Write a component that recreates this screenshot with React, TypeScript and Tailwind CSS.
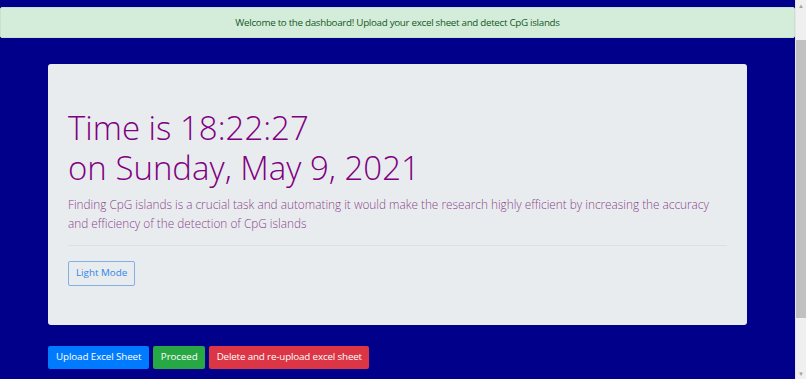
import React from "react"

const font = "font-['Open_Sans','Noto_Sans',sans-serif]"

const App = () => {
  return (
    <div className={`flex h-[379px] w-full overflow-hidden bg-[#00008b] ${font}`}>
      <div className="flex-1 pt-[7px]">
        {/* alert */}
        <div className="rounded-[2px] border border-[#c3e6cb] bg-[#d4edda] px-[12px] py-[7.5px] text-center text-[9.8px] leading-[14.4px] tracking-[-0.3px] text-[#155724]">
          Welcome to the dashboard! Upload your excel sheet and detect CpG islands
        </div>

        <div className="mx-auto mt-[26px] w-[699px]">
          {/* jumbotron */}
          <div className="rounded-[3px] bg-[#e9ecef] px-[20px] pt-[44px] pb-[39px]">
            <h1 className="text-[33px] font-light leading-[40px] text-[#800080]">
              Time is 18:22:27
              <br />
              on Sunday, May 9, 2021
            </h1>
            <p className="mt-[7px] text-[11.8px] font-light leading-[18.5px] text-[#8a468a]">
              Finding CpG islands is a crucial task and automating it would make the research highly efficient by
              increasing the accuracy and efficiency of the detection of CpG islands
            </p>
            <hr className="mt-[13px] mb-[12px] border-t border-[#dcdfe3]" />
            <button className="rounded-[2px] border border-[#7fb0e6] px-[7px] py-[4px] text-[9.8px] leading-[14.4px] text-[#2f86e8]">
              Light Mode
            </button>
          </div>

          <div className="mt-[21px] flex gap-[4px]">
            <button className="rounded-[2px] bg-[#007bff] px-[8px] py-[4.5px] text-[9.8px] leading-[14.4px] tracking-[-0.1px] text-white">
              Upload Excel Sheet
            </button>
            <button className="rounded-[2px] bg-[#28a745] px-[7.5px] py-[4.5px] text-[9.8px] leading-[14.4px] tracking-[-0.1px] text-white">
              Proceed
            </button>
            <button className="rounded-[2px] bg-[#dc3545] px-[7.5px] py-[4.5px] text-[9.8px] leading-[14.4px] tracking-[-0.15px] text-white">
              Delete and re-upload excel sheet
            </button>
          </div>
        </div>
      </div>

      {/* scrollbar */}
      <div className="flex w-[11px] flex-col border-l border-[#e6e6e6] bg-[#f0f0f0]">
        <div className="flex h-[11px] items-center justify-center text-[6px] leading-none text-[#a3a3a3]">▲</div>
        <div className="mt-[29px] h-[278px] bg-[#c1c1c1]" />
        <div className="flex-1" />
        <div className="flex h-[11px] items-center justify-center text-[6px] leading-none text-[#a3a3a3]">▼</div>
      </div>
    </div>
  )
}

export default App
